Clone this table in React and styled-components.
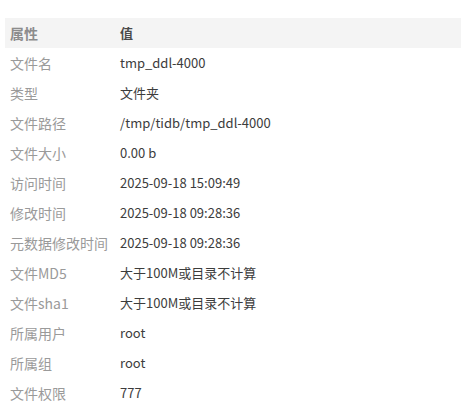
import { Fragment } from "react";
import styled, { createGlobalStyle } from "styled-components";

const GlobalStyle = createGlobalStyle`
  body {
    margin: 0;
    background: #fff;
    font-family: "Noto Sans CJK SC", "Noto Sans", sans-serif;
  }
`;

const Wrapper = styled.div`
  padding: 18px 0 0 5px;
`;

const Table = styled.div`
  display: grid;
  grid-template-columns: 110px 1fr;
  width: 456px;
`;

const HeadCell = styled.div`
  height: 30px;
  line-height: 30px;
  padding-left: 5px;
  background: #f4f4f4;
  font-size: ${(p) => (p.$muted ? "14px" : "13px")};
  font-weight: 700;
  color: ${(p) => (p.$muted ? "#8c8c8c" : "#4a4a4a")};
`;

const Cell = styled.div`
  height: 30px;
  line-height: 30px;
  padding-left: 5px;
  font-size: ${(p) => (p.$label ? "14px" : "13px")};
  white-space: nowrap;
  color: ${(p) => (p.$label ? "#9a9a9a" : "#3c3c3c")};
`;

const rows = [
  ["文件名", "tmp_ddl-4000"],
  ["类型", "文件夹"],
  ["文件路径", "/tmp/tidb/tmp_ddl-4000"],
  ["文件大小", "0.00 b"],
  ["访问时间", "2025-09-18 15:09:49"],
  ["修改时间", "2025-09-18 09:28:36"],
  ["元数据修改时间", "2025-09-18 09:28:36"],
  ["文件MD5", "大于100M或目录不计算"],
  ["文件sha1", "大于100M或目录不计算"],
  ["所属用户", "root"],
  ["所属组", "root"],
  ["文件权限", "777"],
];

export default function App() {
  return (
    <>
      <GlobalStyle />
      <Wrapper>
        <Table>
          <HeadCell $muted>属性</HeadCell>
          <HeadCell>值</HeadCell>
          {rows.map(([k, v]) => (
            <Fragment key={k}>
              <Cell $label>{k}</Cell>
              <Cell>{v}</Cell>
            </Fragment>
          ))}
        </Table>
      </Wrapper>
    </>
  );
}
